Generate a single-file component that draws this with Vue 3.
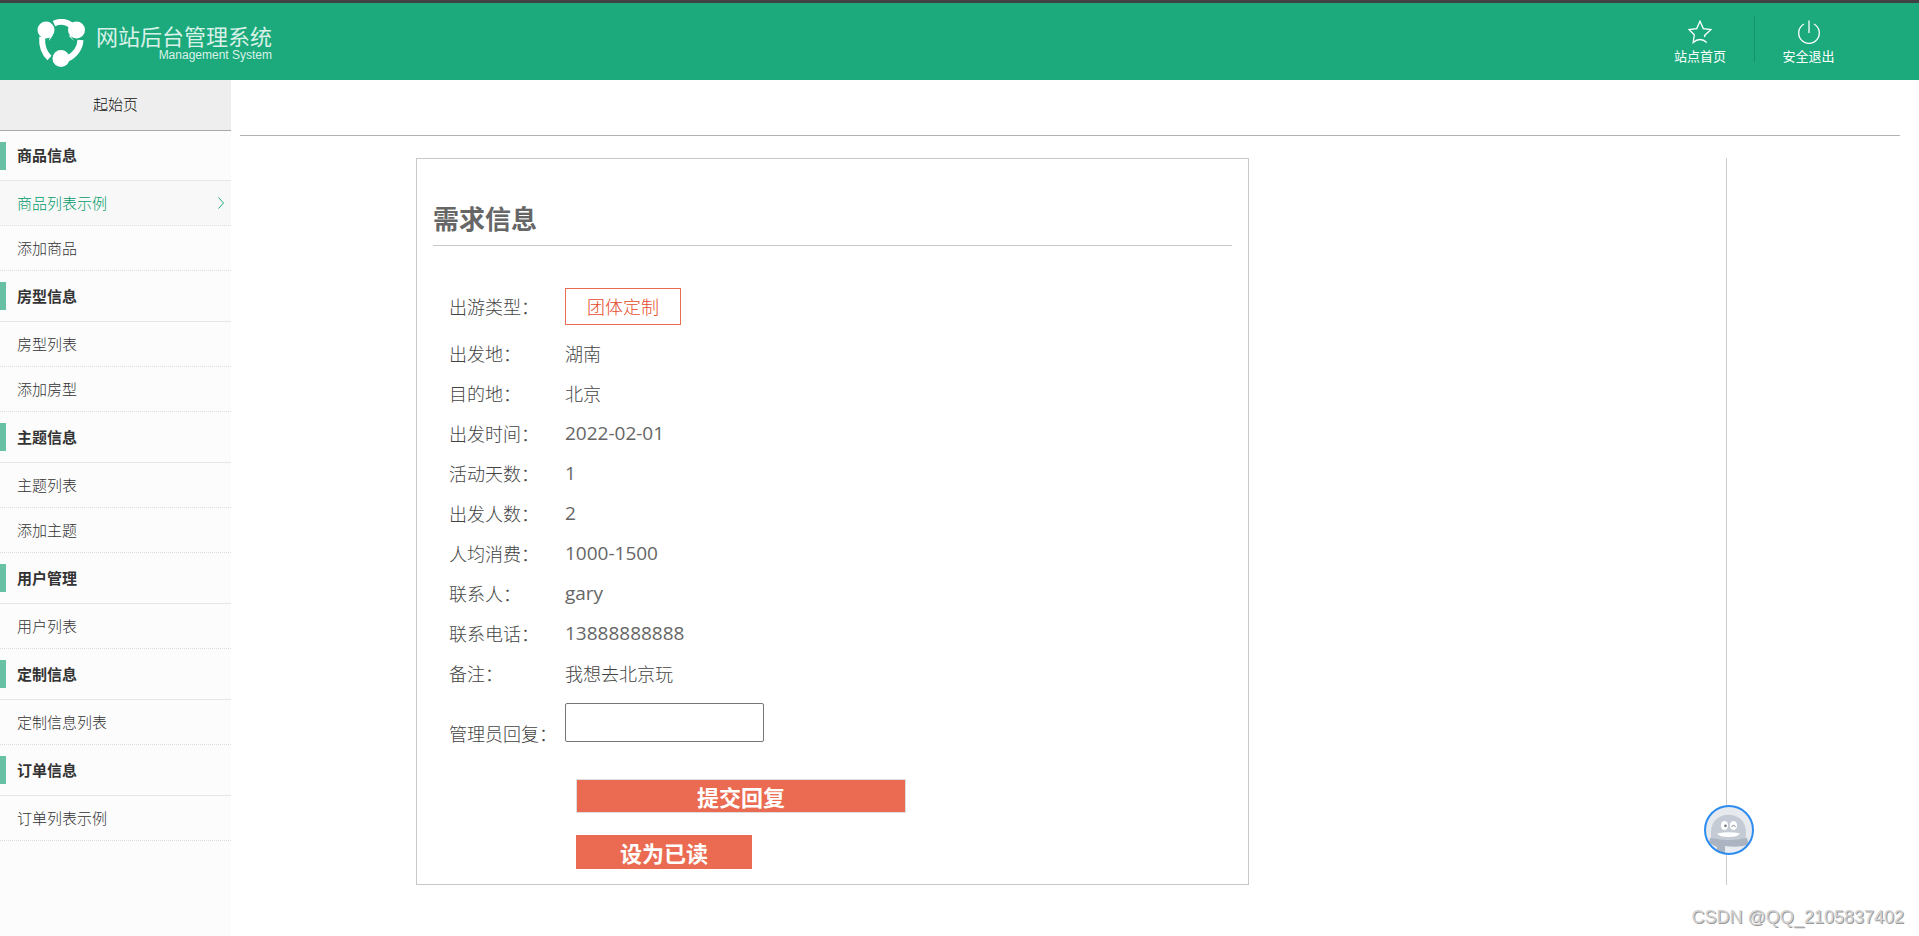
<script setup>
import { ref } from 'vue'

const groups = [
  { title: '商品信息', items: ['商品列表示例', '添加商品'] },
  { title: '房型信息', items: ['房型列表', '添加房型'] },
  { title: '主题信息', items: ['主题列表', '添加主题'] },
  { title: '用户管理', items: ['用户列表'] },
  { title: '定制信息', items: ['定制信息列表'] },
  { title: '订单信息', items: ['订单列表示例'] },
]
const active = ref('商品列表示例')

const fields = [
  { label: '出发地：', value: '湖南' },
  { label: '目的地：', value: '北京' },
  { label: '出发时间：', value: '2022-02-01', latin: true },
  { label: '活动天数：', value: '1', latin: true },
  { label: '出发人数：', value: '2', latin: true },
  { label: '人均消费：', value: '1000-1500', latin: true },
  { label: '联系人：', value: 'gary', latin: true },
  { label: '联系电话：', value: '13888888888', latin: true },
  { label: '备注：', value: '我想去北京玩' },
]
const reply = ref('')
</script>

<template>
  <div class="page">
    <header class="header">
      <div class="brand">
        <svg class="logo" viewBox="0 0 48 48" aria-hidden="true">
          <g fill="none" stroke="#fff" stroke-width="6">
            <path d="M17 4.6 C23 1.8 29 2.6 34 6" />
            <path d="M5.2 18 C4.6 27 7 34 12.5 39" />
            <path d="M43.5 21 C43 29 38 36 30.5 39.5" />
          </g>
          <g fill="#fff">
            <circle cx="9" cy="11" r="8.5" />
            <circle cx="39.5" cy="11" r="8.5" />
            <circle cx="24" cy="39.5" r="8.5" />
            <path d="M13 17 L16 16 L12 22 Z" />
            <path d="M33 16 L37 22 L32 17 Z" />
          </g>
        </svg>
        <div class="brand-text">
          <span class="brand-name">网站后台管理系统</span>
          <span class="brand-sub">Management System</span>
        </div>
      </div>
      <nav class="actions">
        <a href="#" class="action">
          <svg viewBox="0 0 24 24" width="24" height="24" aria-hidden="true">
            <path d="M17 17 L16.5 15.5 L23 9.5 L15.3 8.6 L12 1.2 L8.7 8.6 L1 9.5 L6.3 14.8 L5.2 22.5 Q12 16.5 18.8 22.5" />
          </svg>
          <span>站点首页</span>
        </a>
        <a href="#" class="action">
          <svg viewBox="0 0 24 24" width="24" height="24" aria-hidden="true">
            <path d="M12 0.5 V13 M7 4 A10.3 10.3 0 1 0 17 4" />
          </svg>
          <span>安全退出</span>
        </a>
      </nav>
    </header>

    <div class="body">
      <aside class="sidebar">
        <a href="#" class="start">起始页</a>
        <nav>
          <section v-for="g in groups" :key="g.title">
            <h3 class="group"><span>{{ g.title }}</span></h3>
            <a
              v-for="item in g.items"
              :key="item"
              href="#"
              class="item"
              :class="{ active: item === active }"
              @click.prevent="active = item"
            >
              <span>{{ item }}</span>
              <svg v-if="item === active" viewBox="0 0 6 12" width="6" height="12" aria-hidden="true">
                <path d="M0.5 0.5 L5.5 6 L0.5 11.5" />
              </svg>
            </a>
          </section>
        </nav>
      </aside>

      <main class="content">
        <div class="frame">
          <form class="card" @submit.prevent>
            <h2 class="title">需求信息</h2>
            <div class="row type-row">
              <span class="label">出游类型：</span>
              <span class="tag">团体定制</span>
            </div>
            <div v-for="f in fields" :key="f.label" class="row">
              <span class="label">{{ f.label }}</span>
              <span :class="{ latin: f.latin }">{{ f.value }}</span>
            </div>
            <div class="row reply-row">
              <label class="label" for="reply">管理员回复：</label>
              <input id="reply" v-model="reply" type="text" />
            </div>
            <div class="buttons">
              <button type="submit" class="btn submit">提交回复</button>
              <button type="button" class="btn read">设为已读</button>
            </div>
          </form>
        </div>
      </main>
    </div>

    <button type="button" class="assistant" aria-label="QQ">
      <svg viewBox="0 0 50 50" width="50" height="50" aria-hidden="true">
        <defs>
          <clipPath id="face"><circle cx="25" cy="25" r="24" /></clipPath>
        </defs>
        <circle cx="25" cy="25" r="24" fill="#e6e9ee" />
        <g clip-path="url(#face)">
          <path d="M7 34 V27 C7 4 42 4 42 27 V34 Z" fill="#c5cbd4" />
          <path d="M20 38 H42 V50 H20 Z" fill="#e9ecf0" />
          <path d="M6 33 Q25 36 43 33 L45 40 Q32 43 21 41 V50 H13 V42 L5 38 Z" fill="#abb4c0" />
          <ellipse cx="20.500" cy="20.500" rx="3.600" ry="4.600" fill="#fff" />
          <ellipse cx="29.500" cy="20.500" rx="3.600" ry="4.600" fill="#fff" />
          <circle cx="21.500" cy="20.800" r="1.400" fill="#777f8a" />
          <path d="M27.500 21.500 Q29.500 19.200 31.500 21.500" fill="none" stroke="#777f8a" />
          <path d="M13 28.500 Q25 26 36 28.500 Q34 32 25 32 Q15 32 13 28.500 Z" fill="#fff" />
        </g>
        <circle cx="25" cy="25" r="24" fill="none" stroke="#2d8cf0" stroke-width="2" />
      </svg>
    </button>
    <div class="watermark">CSDN @QQ_2105837402</div>
  </div>
</template>

<style>
html,
body {
  margin: 0;
  background: #fff;
}
</style>

<style scoped>
.page {
  position: relative;
  display: flex;
  flex-direction: column;
  min-height: 100vh;
  font-family: 'Noto Sans CJK SC', sans-serif;
  font-weight: 300;
  color: #444;
}
.page * {
  box-sizing: border-box;
}
a {
  color: inherit;
  text-decoration: none;
}

.header {
  display: flex;
  justify-content: space-between;
  height: 80px;
  border-top: 3px solid #3f4144;
  background: #1caa7c;
  color: #fff;
}
.brand {
  display: flex;
  gap: 11px;
  padding: 16px 0 0 37px;
}
.logo {
  width: 48px;
  height: 48px;
}
.brand-text {
  display: flex;
  flex-direction: column;
  align-items: flex-end;
  padding-top: 3px;
}
.brand-name {
  font-size: 22px;
  font-weight: 400;
  line-height: 26px;
  color: #d9f1e8;
}
.brand-sub {
  color: #d9f1e8;
  font: 12px/14px 'Liberation Sans', Arial, sans-serif;
}
.actions {
  display: flex;
  align-items: flex-start;
  padding: 13px 57px 0 0;
}
.action {
  display: flex;
  flex-direction: column;
  align-items: center;
  gap: 2px;
  width: 108px;
  height: 46px;
  padding-top: 4px;
  font-size: 13px;
  font-weight: 400;
  line-height: 20px;
}
.action + .action {
  border-left: 1px solid #15946b;
}
.action svg {
  flex: none;
  fill: none;
  stroke: #fff;
  stroke-width: 1.3;
}

.body {
  display: flex;
  flex: 1;
}
.sidebar {
  width: 231px;
  flex: none;
  background: #fcfcfc;
  font-size: 15px;
}
.start {
  display: block;
  height: 51px;
  border-bottom: 1px solid #aaa;
  background: #eee;
  color: #111;
  line-height: 48px;
  text-align: center;
}
.group {
  display: flex;
  align-items: center;
  gap: 11px;
  height: 51px;
  margin: 0;
  border-bottom: 1px solid #e6e6e6;
  color: #333;
  font-size: 15px;
  font-weight: 700;
}
section:first-child .group {
  height: 50px;
}
.group::before {
  content: '';
  width: 6px;
  height: 28px;
  background: #68c1a5;
}
.group span,
.item span {
  padding-bottom: 2px;
}
.item {
  display: flex;
  align-items: center;
  justify-content: space-between;
  height: 45px;
  padding: 0 7px 0 17px;
  border-bottom: 1px dotted #ddd;
  color: #333;
}
.item.active {
  background: #f8f8f8;
  color: #009a68;
}
.item svg {
  fill: none;
  stroke: #1caa7c;
}

.content {
  flex: 1;
  margin: 55px 19px 0 9px;
  border-top: 1px solid #b3b3b3;
}
.frame {
  width: 79%;
  margin: 22px 0 0 10.6%;
  border-right: 1px solid #ccc;
}
.card {
  width: 63.6%;
  padding: 40px 16px 15px;
  border: 1px solid #c8c8c8;
  font-size: 18px;
}
.title {
  height: 47px;
  margin: 0 0 33px;
  border-bottom: 1px solid #c8c8c8;
  color: #666;
  font-size: 26px;
  line-height: 37px;
}
.row {
  display: flex;
  align-items: center;
  height: 40px;
  padding-left: 16px;
}
.type-row {
  height: 54px;
}
.label {
  width: 116px;
  flex: none;
}
.latin {
  color: #666;
  font-family: 'Open Sans', 'Noto Sans', sans-serif;
  font-size: 19px;
  font-weight: 400;
}
.tag {
  height: 37px;
  padding: 0 21px;
  border: 1px solid #ea6b51;
  color: #e64a2c;
  line-height: 34px;
}
.reply-row {
  align-items: flex-start;
  height: 60px;
  padding-top: 10px;
}
.reply-row .label {
  padding-top: 17px;
  line-height: 26px;
}
input {
  width: 199px;
  height: 39px;
  padding: 0 8px;
  border: 1px solid #767676;
  border-radius: 2px;
  background: #fff;
  color: #666;
  font: inherit;
}
.buttons {
  display: flex;
  flex-direction: column;
  gap: 22px;
  padding: 26px 0 0 143px;
}
.btn {
  height: 34px;
  padding: 0;
  border: 0;
  background: #ea6b51;
  color: #fff;
  font: 700 22px/32px 'Noto Sans CJK SC', sans-serif;
}
.submit {
  width: 330px;
  border: 1px solid #ddd;
}
.read {
  width: 176px;
}

.assistant {
  position: absolute;
  right: 165px;
  bottom: 81px;
  width: 50px;
  height: 50px;
  padding: 0;
  border: 0;
  background: none;
}
.assistant svg {
  display: block;
}
.watermark {
  position: absolute;
  right: 15px;
  bottom: 8px;
  color: #d2d2d2;
  font: 18px/22px 'Liberation Sans', Arial, sans-serif;
  text-shadow: 1px 1px 0 #999;
}
</style>
